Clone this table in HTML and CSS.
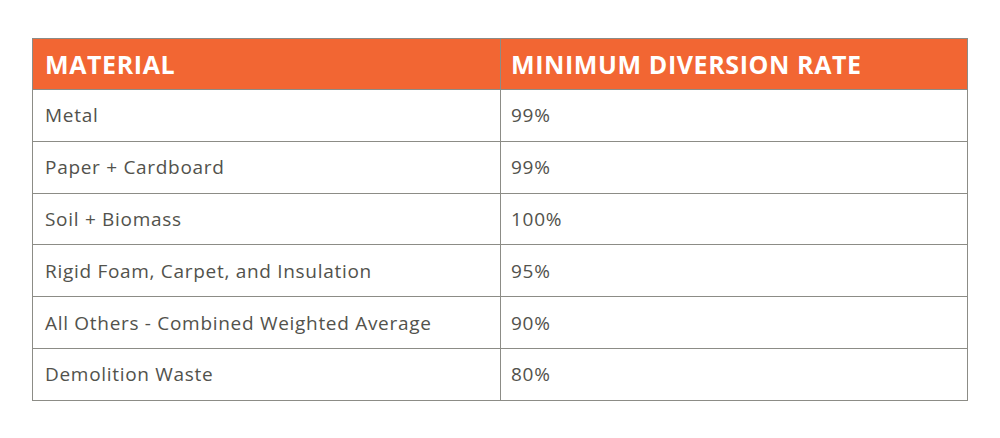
FILE: index.html
```html
<!DOCTYPE html>
<html>
<head>
<meta charset="utf-8">
<link rel="stylesheet" href="styles.css">
</head>
<body>
<div class="wrap">
<table class="rates">
<thead>
<tr><th class="col-a">MATERIAL</th><th>MINIMUM DIVERSION RATE</th></tr>
</thead>
<tbody>
<tr><td>Metal</td><td>99%</td></tr>
<tr><td>Paper + Cardboard</td><td>99%</td></tr>
<tr><td>Soil + Biomass</td><td>100%</td></tr>
<tr><td>Rigid Foam, Carpet, and Insulation</td><td>95%</td></tr>
<tr><td>All Others - Combined Weighted Average</td><td>90%</td></tr>
<tr><td>Demolition Waste</td><td>80%</td></tr>
</tbody>
</table>
</div>
</body>
</html>
```

FILE: styles.css
```css
html, body { margin: 0; padding: 0; background: #fff; }
.wrap { padding: 38px 0 0 32px; }
.rates {
  border-collapse: collapse;
  width: 936px;
  table-layout: fixed;
  font-family: "Open Sans", sans-serif;
  color: #52524c;
}
.rates th, .rates td {
  border: 1px solid #8c8c86;
  text-align: left;
  padding: 0 0 0 10px;
}
.rates .col-a { width: 455px; padding-left: 12px; }
.rates td:first-child { padding-left: 12px; }
.rates th {
  background: #f26633;
  color: #fff;
  font-weight: 700;
  font-size: 25px;
  height: 50px;
  letter-spacing: 0.6px;
}
.rates td {
  font-size: 19px;
  height: 50.8px;
  font-weight: 500;
  letter-spacing: 0.7px;
}
```
